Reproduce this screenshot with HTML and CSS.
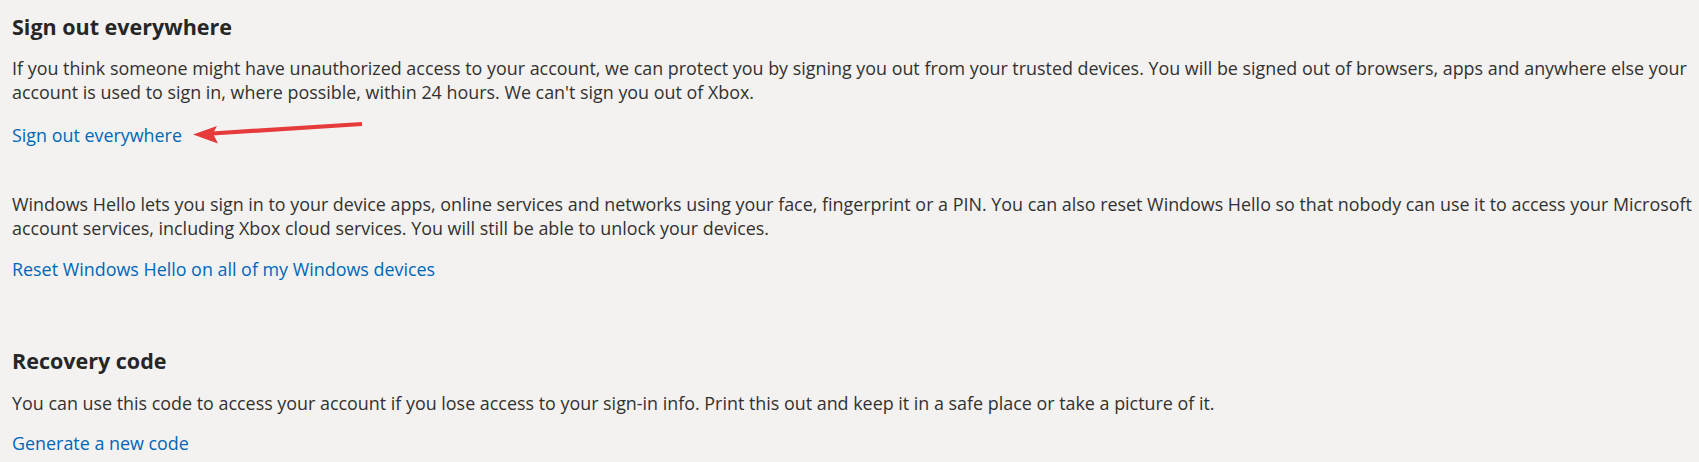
FILE: index.html
```html
<!DOCTYPE html>
<html lang="en">
<head>
<meta charset="utf-8">
<title>Security settings</title>
<link rel="stylesheet" href="styles.css">
</head>
<body>
<main class="page">
  <section class="block block-signout">
    <h2 class="heading">Sign out everywhere</h2>
    <p class="text">If you think someone might have unauthorized access to your account, we can protect you by signing you out from your trusted devices. You will be signed out of browsers, apps and anywhere else your<br>account is used to sign in, where possible, within 24 hours. We can't sign you out of Xbox.</p>
    <div class="link-row">
      <a class="link" href="#">Sign out everywhere</a>
      <svg class="arrow" width="190" height="36" viewBox="0 0 190 36" aria-hidden="true">
        <path d="M27 19.5 L177 10" stroke="#e63b3b" stroke-width="4.2" stroke-linecap="butt" fill="none"/>
        <path d="M8 20.5 L32 12 L28 19.6 L33 29.5 Z" fill="#e63b3b"/>
      </svg>
    </div>
  </section>
  <section class="block block-hello">
    <p class="text">Windows Hello lets you sign in to your device apps, online services and networks using your face, fingerprint or a PIN. You can also reset Windows Hello so that nobody can use it to access your Microsoft<br>account services, including Xbox cloud services. You will still be able to unlock your devices.</p>
    <div class="link-row">
      <a class="link" href="#">Reset Windows Hello on all of my Windows devices</a>
    </div>
  </section>
  <section class="block block-recovery">
    <h2 class="heading">Recovery code</h2>
    <p class="text">You can use this code to access your account if you lose access to your sign-in info. Print this out and keep it in a safe place or take a picture of it.</p>
    <div class="link-row">
      <a class="link" href="#">Generate a new code</a>
    </div>
  </section>
</main>
</body>
</html>
```
FILE: styles.css
```css
html, body {
  margin: 0;
  padding: 0;
  background: #f3f2f1;
}
body {
  font-family: "Open Sans", "Noto Sans", sans-serif;
  color: #323130;
  width: 1699px;
  height: 462px;
  overflow: hidden;
}
.page {
  padding: 13px 0 0 12px;
  display: flex;
  flex-direction: column;
}
.block {
  display: flex;
  flex-direction: column;
}
.heading {
  margin: 0;
  font-size: 21.5px;
  line-height: 28px;
  font-weight: 700;
  color: #262626;
}
.text {
  margin: 0;
  font-size: 17.9px;
  line-height: 24px;
  white-space: nowrap;
}
.heading + .text {
  margin-top: 15px;
}
.link-row {
  position: relative;
  margin-top: 19px;
  height: 24px;
}
.link {
  font-size: 17.9px;
  line-height: 24px;
  color: #0067b8;
  text-decoration: none;
}
.arrow {
  position: absolute;
  left: 173px;
  top: -9px;
}
.block-hello {
  margin-top: 45px;
}
.block-hello .link-row {
  margin-top: 17px;
}
.block-recovery {
  margin-top: 66px;
}
.block-recovery .heading + .text {
  margin-top: 16px;
}
.block-recovery .link-row {
  margin-top: 16px;
}
```
